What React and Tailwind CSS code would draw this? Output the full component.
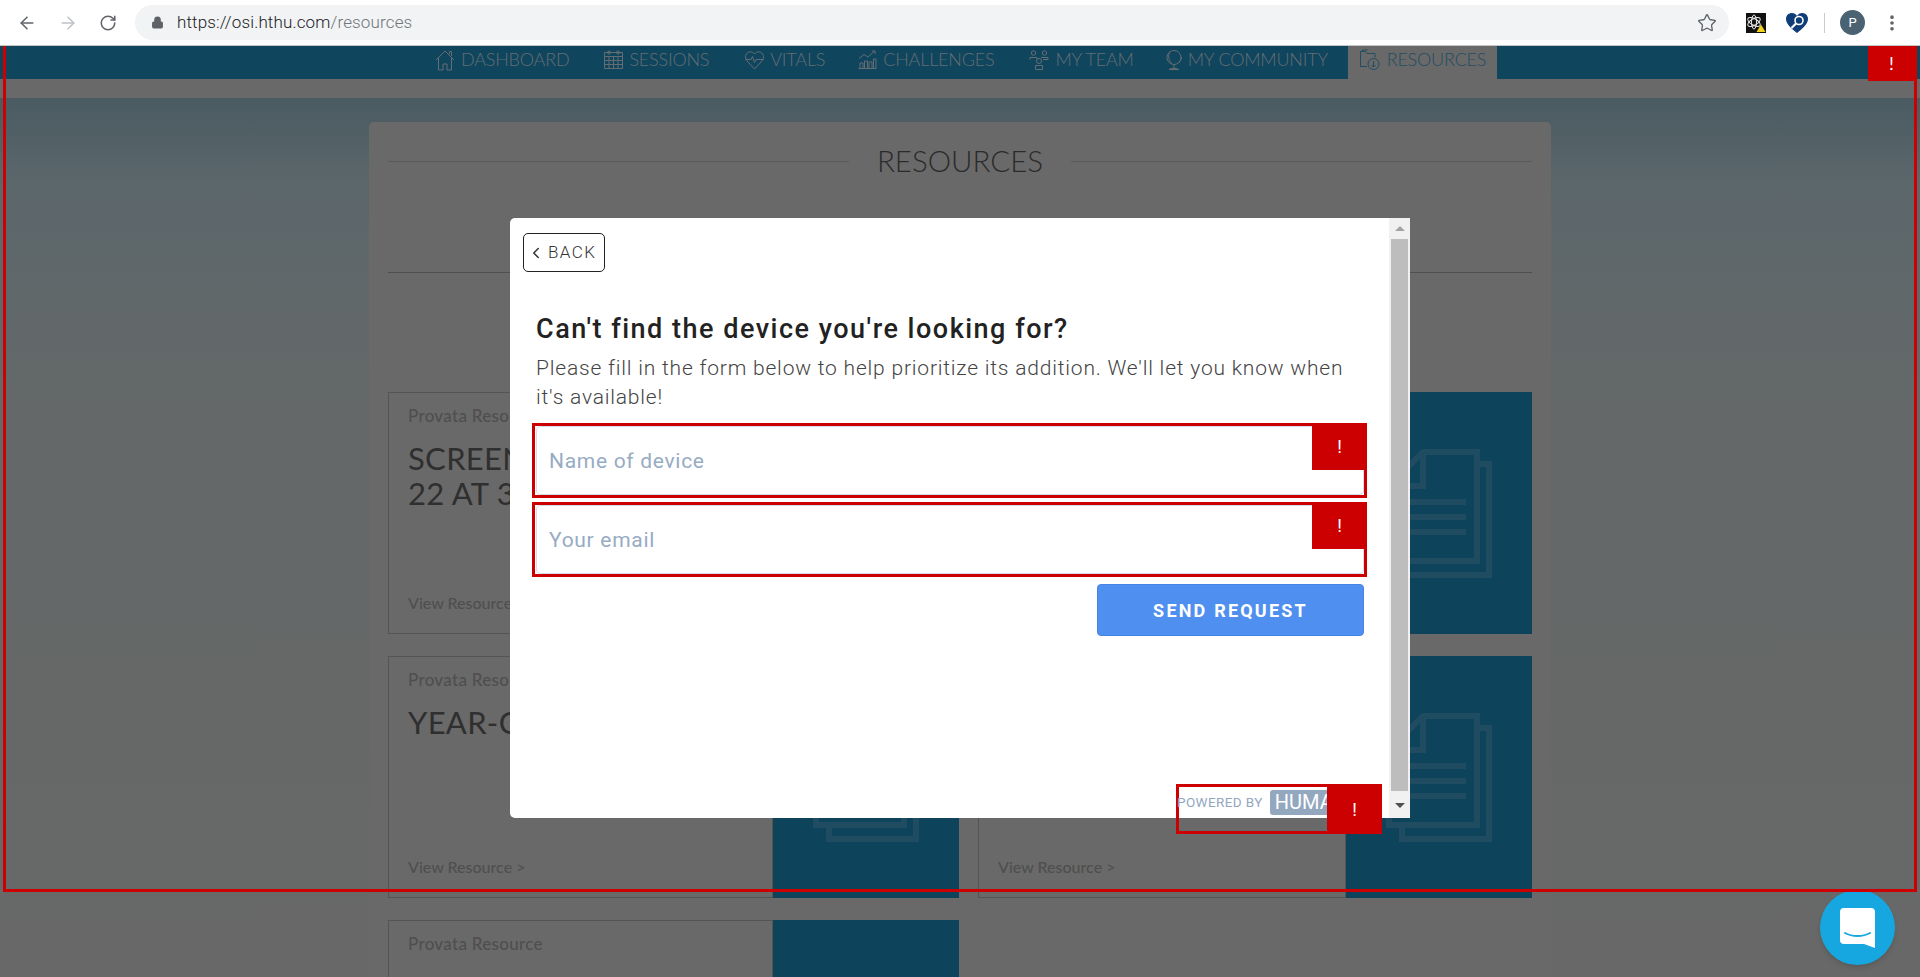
import { ArrowLeft, ArrowRight, ChevronLeft, EllipsisVertical, Lock, RotateCw, Star } from 'lucide-react'

const modalFont = { fontFamily: 'Roboto, "Noto Sans", sans-serif' }

function HomeIcon() {
    return (
        <svg width="20" height="22" viewBox="0 0 20 22" fill="none" stroke="currentColor" strokeWidth="1">
            <path d="M1 11 10 2l9 9M3.500 9v12h4.500v-6h4v6h4.500V9M14.500 5V2.500h2V7" />
        </svg>
    )
}

function CalendarIcon() {
    return (
        <svg width="19" height="19" viewBox="0 0 19 19" fill="none" stroke="currentColor" strokeWidth="1">
            <path d="M.5 2.500h18v16H.5zM.5 6.500h18M.5 10.500h18M.5 14.500h18M5 6.500v12M9.500 6.500v12M14 6.500v12" />
            <circle cx="5" cy="2.500" r="1.500" />
            <circle cx="14" cy="2.500" r="1.500" />
        </svg>
    )
}

function HeartIcon() {
    return (
        <svg width="19" height="20" viewBox="0 0 19 20" fill="none" stroke="currentColor" strokeWidth="1">
            <path d="M3 12C.5 9.500.2 7.500.8 5.200 1.800 1.500 7 .5 9.500 4 12 .5 17.200 1.500 18.200 5.200c.6 2.300.3 4.300-2.200 6.800l-6.500 7z" />
            <path d="M.5 9.500h5.500l1.500-3 2 6 1.500-3h7.500" />
        </svg>
    )
}

function ChartIcon() {
    return (
        <svg width="19" height="19" viewBox="0 0 19 19" fill="none" stroke="currentColor" strokeWidth="1">
            <path d="M1 8.500 6 4.500l4 2.500 6.500-6M14 1h3v3M.5 18.500h18M2 18v-5h3v5M6.500 18v-7h3v7M11 18v-6h3v6M15.500 18V9h2.500v9" />
        </svg>
    )
}

function TeamIcon() {
    return (
        <svg width="20" height="20" viewBox="0 0 20 20" fill="none" stroke="currentColor" strokeWidth="1">
            <circle cx="4.500" cy="3" r="2.200" />
            <circle cx="15.500" cy="3" r="2.200" />
            <circle cx="10" cy="11" r="2.500" />
            <path d="M1 9.500V7.500h7v2M12 7.500h7v2h-5M6.500 19.500V15.500h7v4z" />
        </svg>
    )
}

function GlobeIcon() {
    return (
        <svg width="16" height="22" viewBox="0 0 16 22" fill="none" stroke="currentColor" strokeWidth="1">
            <circle cx="8" cy="8.500" r="7" />
            <path d="M4 2.500c-2 3-2 9 2 12M12.500 14c1.500-1.500 3-3.500 3-6M8 15.500v4M3 20.500c2-1.500 8-1.500 10 0z" />
        </svg>
    )
}

function FolderIcon() {
    return (
        <svg width="22" height="22" viewBox="0 0 22 22" fill="none" stroke="currentColor" strokeWidth="1">
            <path d="M8 17.500H1.500v-15h5l1.500 2h8v4M3.500 2.500V1h5" />
            <circle cx="14.500" cy="15" r="5.500" />
            <path d="M14.500 12v6M12.500 16l2 2 2-2" />
        </svg>
    )
}

function DocIcon() {
    return (
        <svg width="106" height="129" viewBox="0 0 106 129" fill="none" stroke="#1f4c60" strokeWidth="6" className="shrink-0">
            <path d="M37 3H91V112H3V37zM37 3V37H3" />
            <path d="M91 15H103V126H16V112" />
            <path d="M14 53H80M14 68H80M14 83H80" />
        </svg>
    )
}

function NavItem({ icon, label, active }) {
    return (
        <div className={`flex h-[33px] items-center gap-[6px] pb-[6px] ${active ? 'text-[#1f4d63]' : 'text-[#646d72]'}`}>
            {icon}
            <span className="text-[18px] font-light tracking-[-0.2px]">{label}</span>
        </div>
    )
}

function ErrorBadge({ className }) {
    return (
        <div className={`absolute flex items-center justify-center bg-[#cc0000] text-[18px] text-white ${className}`}>
            !
        </div>
    )
}

function ResourceCard({ title, showLink = true }) {
    return (
        <div className="flex h-[242px] overflow-hidden">
            <div className="flex min-w-0 flex-1 flex-col overflow-hidden border border-[#545454] px-[19px] pt-[10px]">
                <p className="text-[17px] font-medium tracking-[0.3px] text-[#4f4f4f]">Provata Resource</p>
                <p className="mt-[12px] min-h-[35px] text-[31px] leading-[35px] tracking-[0.3px] whitespace-pre text-[#2f2f2f]">{title}</p>
                {showLink ? <p className="mt-auto mb-[18px] text-[16px] font-medium text-[#4f4f4f]">View Resource &gt;</p> : null}
            </div>
            <div className="flex w-[186px] items-center justify-center bg-[#0d445b]">
                <DocIcon />
            </div>
        </div>
    )
}

function FormField({ placeholder, className }) {
    return (
        <div className={`relative ml-[22px] h-[75px] w-[835px] border-[3px] border-[#cc0000] pl-[1px] ${className}`}>
            <input
                type="text"
                placeholder={placeholder}
                className="h-[69px] w-full rounded-[4px] border border-[#d5dde6] bg-white px-[12px] text-[21px] tracking-[0.7px] outline-none placeholder:text-[#97abc4]"
                style={modalFont}
            />
            <ErrorBadge className="top-[-3px] right-[-3px] h-[47px] w-[55px]" />
        </div>
    )
}

function App() {
    return (
        <div
            className="relative h-[977px] w-full overflow-hidden bg-[#666a6a]"
            style={{ fontFamily: 'Lato, "Open Sans", sans-serif' }}
        >
            {/* browser toolbar */}
            <div className="flex h-[46px] items-center border-b border-[#c4c4c4] bg-white pr-[18px]">
                <div className="flex w-[135px] shrink-0 items-center pl-[17px] text-[#5f6368]">
                    <ArrowLeft size={20} strokeWidth={1.8} />
                    <ArrowRight size={20} strokeWidth={1.8} className="ml-[21px] text-[#bdc1c6]" />
                    <RotateCw size={18} strokeWidth={2} className="ml-[21px]" />
                </div>
                <div className="flex h-[35px] w-[1594px] shrink-0 items-center rounded-full bg-[#f1f3f4] pr-[12px] pl-[16px]">
                    <Lock size={13} fill="#5f6368" className="text-[#5f6368]" />
                    <p className="ml-[13px] text-[17px] font-light tracking-[0.15px] text-[#202124]" style={{ fontFamily: 'Roboto, sans-serif' }}>
                        https://osi.hthu.com<span className="text-[#70757a]">/resources</span>
                    </p>
                    <Star size={20} strokeWidth={1.6} className="ml-auto text-[#5f6368]" />
                </div>
                <div className="ml-[17px] flex h-[20px] w-[20px] shrink-0 items-center justify-center bg-[#111111]">
                    <svg width="20" height="20" viewBox="0 0 20 20" fill="none" stroke="#e5e5e5" strokeWidth="1">
                        <ellipse cx="8" cy="9" rx="7" ry="3.200" transform="rotate(30 8 9)" />
                        <ellipse cx="8" cy="9" rx="7" ry="3.200" transform="rotate(-30 8 9)" />
                        <ellipse cx="8" cy="9" rx="2.500" ry="7" />
                        <path d="M15 11.500 19.500 19h-9z" fill="#f2d21f" stroke="none" />
                    </svg>
                </div>
                <svg width="22" height="20" viewBox="0 0 22 20" className="ml-[20px] shrink-0">
                    <path d="M11 20C5 15 0 11 0 6 0 2 3 0 6 0c2 0 4 1 5 3 1-2 3-3 5-3 3 0 6 2 6 6 0 5-5 9-11 14z" fill="#0f3d78" />
                    <circle cx="13" cy="7.500" r="4" fill="#0f3d78" stroke="#ffffff" strokeWidth="1.600" />
                    <path d="M10 10.500 5.500 15" stroke="#ffffff" strokeWidth="2.200" />
                </svg>
                <div className="ml-[16px] h-[20px] w-px shrink-0 bg-[#c8cacc]" />
                <div className="ml-[15px] flex h-[25px] w-[25px] shrink-0 items-center justify-center rounded-full bg-[#4a6272] text-[13px] text-white" style={modalFont}>
                    P
                </div>
                <EllipsisVertical size={20} strokeWidth={2.4} className="ml-[17px] shrink-0 text-[#5f6368]" />
            </div>

            {/* site nav */}
            <div className="flex h-[33px] bg-[#10455e] pl-[435px]">
                <NavItem icon={<HomeIcon />} label="DASHBOARD" />
                <div className="w-[35px]" />
                <NavItem icon={<CalendarIcon />} label="SESSIONS" />
                <div className="w-[36px]" />
                <NavItem icon={<HeartIcon />} label="VITALS" />
                <div className="w-[33px]" />
                <NavItem icon={<ChartIcon />} label="CHALLENGES" />
                <div className="w-[35px]" />
                <NavItem icon={<TeamIcon />} label="MY TEAM" />
                <div className="w-[32px]" />
                <NavItem icon={<GlobeIcon />} label="MY COMMUNITY" />
                <div className="w-[20px]" />
                <div className="flex w-[149px] justify-center bg-[#696969]">
                    <NavItem icon={<FolderIcon />} label="RESOURCES" active />
                </div>
            </div>
            <div className="h-[19px] bg-[#696969]" />

            {/* page */}
            <div className="flex h-[879px] justify-center bg-[linear-gradient(180deg,#4a5b62_0%,#5c676b_10%,#646868_35%,#686868_100%)] pt-[24px]">
                <div className="h-[900px] w-[1182px] rounded-t-[5px] bg-[#696969] px-[19px] pt-[24px]">
                    <div className="flex h-[30px] items-center gap-[28px]">
                        <div className="h-px flex-1 bg-[#5a5a5a]" />
                        <h1 className="text-[29.500px] font-light text-[#2b2b2b]">RESOURCES</h1>
                        <div className="h-px flex-1 bg-[#5a5a5a]" />
                    </div>
                    <div className="mt-[96px] h-px bg-[#4f4f4f]" />
                    <div className="mt-[119px] grid grid-cols-[571px_554px] gap-x-[19px] gap-y-[22px]">
                        <ResourceCard title={'SCREEN SHOT 2018-11-\n22 AT 3.41.52 PM'} />
                        <ResourceCard title="Device guide" />
                        <ResourceCard title="YEAR-COST GUIDE" />
                        <ResourceCard title="Device guide" />
                        <ResourceCard title="" showLink={false} />
                    </div>
                </div>
            </div>

            {/* chat launcher */}
            <div className="absolute top-[890px] left-[1820px] flex h-[75px] w-[75px] items-center justify-center rounded-full bg-[#17a7e0] shadow-md">
                <svg width="35" height="40" viewBox="0 0 35 40">
                    <path d="M4 0h27a4 4 0 0 1 4 4v36l-11-4H4a4 4 0 0 1-4-4V4a4 4 0 0 1 4-4z" fill="#ffffff" />
                    <path d="M5 25c7 4 18 4 25 0" fill="none" stroke="#17a7e0" strokeWidth="2" strokeLinecap="round" />
                </svg>
            </div>

            {/* page level error outline */}
            <div className="pointer-events-none absolute top-[46px] left-[3px] h-[846px] w-[1914px] border-[3px] border-t-0 border-[#cc0000]" />
            <ErrorBadge className="top-[46px] right-[5px] h-[35px] w-[47px]" />

            {/* modal */}
            <div className="absolute top-[218px] left-[510px] flex h-[600px] w-[900px] rounded-l-[5px] bg-white" style={modalFont}>
                <div className="min-w-0 flex-1">
                    <button
                        type="button"
                        className="mt-[15px] ml-[13px] flex h-[39px] w-[82px] items-center rounded-[5px] border border-[#222222] pl-[3px] text-[17px] font-light tracking-[1.4px] text-[#333333]"
                    >
                        <ChevronLeft size={18} strokeWidth={2} className="mr-[3px]" />
                        BACK
                    </button>
                    <h2 className="mt-[40px] ml-[26px] text-[27px] leading-[34px] font-medium tracking-[1.5px] text-[#222222]">
                        Can't find the device you're looking for?
                    </h2>
                    <p className="mt-[8px] ml-[26px] w-[830px] text-[21px] leading-[29px] font-light tracking-[0.8px] text-[#444444]">
                        Please fill in the form below to help prioritize its addition. We'll let you know when it's available!
                    </p>
                    <FormField placeholder="Name of device" className="mt-[11px]" />
                    <FormField placeholder="Your email" className="mt-[4px]" />
                    <button
                        type="button"
                        className="mt-[7px] ml-[587px] h-[52px] w-[267px] rounded-[4px] border border-[#4583e6] bg-[#4f8ff0] text-[18px] font-bold tracking-[2.2px] text-white"
                    >
                        SEND REQUEST
                    </button>
                </div>
                <div className="flex w-[21px] shrink-0 flex-col items-center bg-[#f1f1f1]">
                    <div className="mt-[8px] h-0 w-0 border-x-[5px] border-b-[5px] border-x-transparent border-b-[#a3a3a3]" />
                    <div className="mt-[8px] h-[552px] w-[17px] bg-[#bdbdbd]" />
                    <div className="mt-[12px] h-0 w-0 border-x-[5px] border-t-[5px] border-x-transparent border-t-[#505050]" />
                </div>

                {/* powered by badge */}
                <div className="absolute top-[566px] left-[666px] h-[50px] w-[206px] border-[3px] border-[#cc0000]">
                    <div className="-ml-[2px] flex h-[30px] items-center overflow-hidden">
                        <span className="text-[13.500px] tracking-[0.4px] text-[#93a7bf]">POWERED BY</span>
                        <span className="ml-[7px] flex h-[25px] w-[70px] items-center rounded-l-[3px] bg-[#93a7bf] pl-[5px] text-[20px] text-white">HUMA</span>
                    </div>
                    <ErrorBadge className="top-[-3px] right-[-3px] h-[50px] w-[55px]" />
                </div>
            </div>
        </div>
    )
}

export default App
